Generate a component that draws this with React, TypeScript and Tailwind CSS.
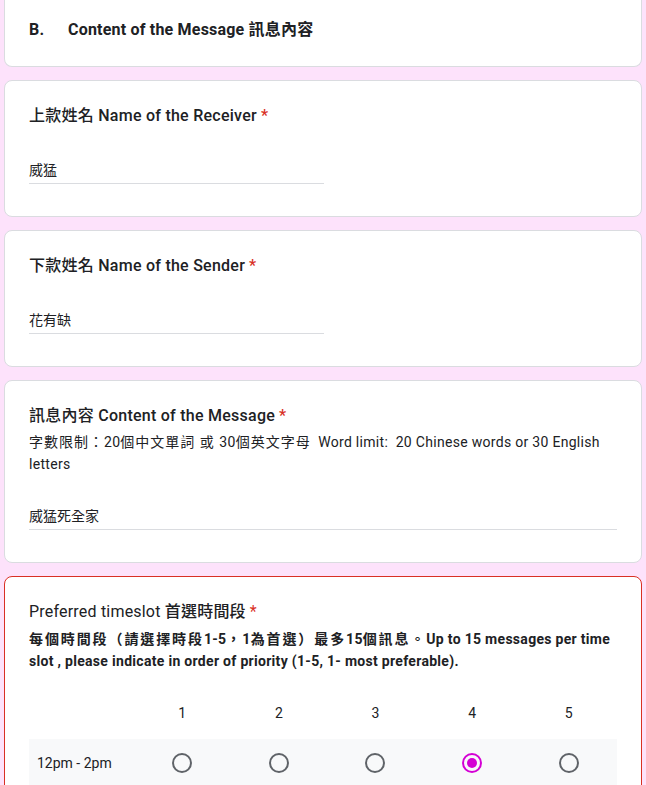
import React from 'react'

const font = { fontFamily: 'Roboto, "Noto Sans CJK TC", sans-serif' }

function Req() {
  return <span className="text-[#d93025] ml-[4px]">*</span>
}

function Radio({ checked }: { checked?: boolean }) {
  if (checked) {
    return (
      <div className="w-[20px] h-[20px] rounded-full border-2 border-[#d400d4] flex items-center justify-center">
        <div className="w-[10px] h-[10px] rounded-full bg-[#d400d4]"></div>
      </div>
    )
  }
  return <div className="w-[20px] h-[20px] rounded-full border-2 border-[#5f6368]"></div>
}

function ShortAnswer({ title, value }: { title: string; value: string }) {
  return (
    <div className="bg-white rounded-lg border border-[#dadce0] px-[24px] pt-[23px] pb-[32px]">
      <div className="text-[16px] leading-[24px] font-medium tracking-[0.25px] text-[#202124]">
        {title}
        <Req />
      </div>
      <div className="mt-[32px] w-[295px] border-b border-[#dadce0] pb-[3px] text-[14px] leading-[20px] text-[#202124]">
        {value}
      </div>
    </div>
  )
}

export default function App() {
  const cols = [1, 2, 3, 4, 5]
  return (
    <div className="min-h-screen bg-[#fde2fb] px-[4px] pb-[40px]" style={font}>
      <div className="flex flex-col gap-[13px]">
        {/* Section header */}
        <div className="bg-white rounded-b-lg border border-t-0 border-[#dadce0] px-[24px] pt-[18px] pb-[24px]">
          <div className="text-[16px] leading-[24px] font-bold tracking-[0.2px] text-[#202124] flex">
            <span className="w-[39px]">B.</span>
            <span>Content of the Message 訊息內容</span>
          </div>
        </div>

        <ShortAnswer title="上款姓名 Name of the Receiver" value="威猛" />
        <ShortAnswer title="下款姓名 Name of the Sender" value="花有缺" />

        {/* Message content */}
        <div className="bg-white rounded-lg border border-[#dadce0] px-[24px] pt-[23px] pb-[32px]">
          <div className="text-[16px] leading-[24px] font-medium tracking-[0.25px] text-[#202124]">
            訊息內容 Content of the Message
            <Req />
          </div>
          <div className="mt-[3px] text-[14px] leading-[22px] tracking-[0.3px] text-[#202124] pr-[10px]">
            <span className="tracking-[1px]">字數限制：</span>20<span className="tracking-[1px]">個中文單詞 或 </span>30<span className="tracking-[1px]">個英文字母</span>&nbsp; Word limit:&nbsp; 20 Chinese words or 30 English letters
          </div>
          <div className="mt-[31px] border-b border-[#dadce0] pb-[3px] text-[14px] leading-[20px] text-[#202124]">
            威猛死全家
          </div>
        </div>

        {/* Timeslot grid */}
        <div className="bg-white rounded-lg border border-[#d93025] px-[24px] pt-[23px] pb-[24px]">
          <div className="text-[16px] leading-[24px] tracking-[0.2px] text-[#202124]">
            Preferred timeslot <span className="font-medium">首選時間段</span>
            <Req />
          </div>
          <div className="mt-[4px] text-[14px] leading-[22px] font-bold tracking-[0.3px] text-[#202124] pr-[2px]">
            <span className="tracking-[1.9px]">每個時間段（請選擇時段</span>1-5<span className="tracking-[1.9px]">，</span>1<span className="tracking-[1.9px]">為首選）最多</span>15<span className="tracking-[1.9px]">個訊息。</span>Up to 15 messages per time slot , please indicate in order of priority (1-5, 1- most preferable).
          </div>
          <div className="mt-[29px] grid grid-cols-[105px_repeat(5,1fr)] text-[14px] text-[#202124]">
            <div className="h-[24px]"></div>
            {cols.map(c => (
              <div key={c} className="h-[24px] leading-[24px] text-center">{c}</div>
            ))}
            <div className="col-span-6 h-[14px]"></div>
            <div className="h-[48px] bg-[#f8f9fa] pl-[8px] flex items-center">12pm - 2pm</div>
            {cols.map(c => (
              <div key={c} className="h-[48px] bg-[#f8f9fa] flex items-center justify-center">
                <Radio checked={c === 4} />
              </div>
            ))}
            <div className="h-[48px] pl-[8px] flex items-center">2pm - 4pm</div>
            {cols.map(c => (
              <div key={c} className="h-[48px] flex items-center justify-center">
                <Radio />
              </div>
            ))}
          </div>
        </div>
      </div>
    </div>
  )
}
